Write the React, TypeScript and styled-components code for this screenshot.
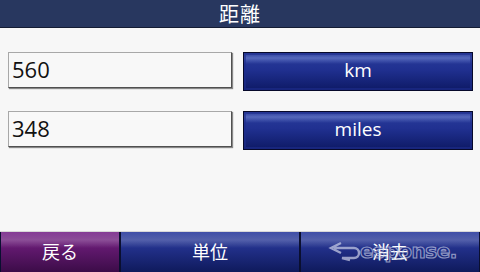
import styled, { createGlobalStyle } from "styled-components";

const GlobalStyle = createGlobalStyle`
    html, body {
        margin: 0;
        padding: 0;
        background: #f7f7f7;
    }
    * {
        box-sizing: border-box;
    }
`;

const rows = [
    { value: "560", unit: "km" },
    { value: "348", unit: "miles" },
];

export default function App() {
    return (
        <>
            <GlobalStyle />
            <Screen>
                <Header>距離</Header>
                <Content>
                    {rows.map(row => (
                        <Row key={row.unit}>
                            <ValueBox>{row.value}</ValueBox>
                            <UnitButton>{row.unit}</UnitButton>
                        </Row>
                    ))}
                </Content>
                <Footer>
                    <FooterButton $tone="purple" $width={120}>戻る</FooterButton>
                    <FooterButton $tone="blue" $width={180}>単位</FooterButton>
                    <FooterButton $tone="blue" $width={180}>消去</FooterButton>
                    <Watermark aria-hidden="true">
                        <svg width="36" height="22" viewBox="0 0 36 22">
                            <path
                                d="M13 3 L3 8 L13 13 M6 8 H26 a5 5 0 0 1 0 10 H14 L22 20"
                                fill="none"
                                stroke="rgba(205,210,232,0.7)"
                                strokeWidth="2.4"
                            />
                        </svg>
                        <span>esponse.</span>
                    </Watermark>
                </Footer>
            </Screen>
        </>
    );
}

const Screen = styled.div`
    width: 480px;
    height: 272px;
    display: flex;
    flex-direction: column;
    background: #f7f7f7;
    overflow: hidden;
    font-family: "Open Sans", "Noto Sans", "Noto Sans CJK JP", sans-serif;
`;

const Header = styled.div`
    height: 28px;
    display: flex;
    align-items: center;
    justify-content: center;
    background: #28375f;
    border-bottom: 1px solid #141c33;
    color: #ffffff;
    font-family: "Noto Sans CJK JP", sans-serif;
    font-size: 20px;
    line-height: 1;
    letter-spacing: 1px;
`;

const Content = styled.div`
    flex: 1;
    display: flex;
    flex-direction: column;
    gap: 20px;
    padding: 24px 7px 0 8px;
`;

const Row = styled.div`
    display: flex;
    gap: 11px;
`;

const ValueBox = styled.div`
    width: 224px;
    height: 36px;
    background: #f8f8f8;
    border: 1px solid #a8a8a8;
    border-bottom-color: #505050;
    border-right-color: #505050;
    box-shadow: 1px 1px 1px rgba(0, 0, 0, 0.45);
    color: #111111;
    font-size: 22px;
    line-height: 33px;
    padding-left: 3px;
`;

const UnitButton = styled.div`
    width: 230px;
    height: 39px;
    border: 1px solid #07092a;
    background:
        linear-gradient(180deg, rgba(255, 255, 255, 0) 0px, rgba(140, 160, 230, 0.45) 5px, rgba(255, 255, 255, 0) 11px),
        linear-gradient(180deg, #2a3d9c 0%, #203090 45%, #0e1a66 100%);
    box-shadow: inset 0 0 0 2px rgba(30, 45, 140, 0.6);
    color: #ffffff;
    font-size: 19px;
    line-height: 35px;
    text-align: center;
`;

const Footer = styled.div`
    position: relative;
    height: 41px;
    display: flex;
    background: #0a0f30;
    border-top: 1px solid #d8d8d8;
`;

const tones = {
    purple: "linear-gradient(180deg, #7a2a8c 0%, #62196f 40%, #3c0c48 100%)",
    blue: "linear-gradient(180deg, #2f40a0 0%, #22308a 40%, #0f1a5c 100%)",
};

const FooterButton = styled.div<{ $tone: "purple" | "blue"; $width: number }>`
    width: ${props => props.$width}px;
    height: 100%;
    display: flex;
    align-items: center;
    justify-content: center;
    background:
        linear-gradient(180deg, rgba(255, 255, 255, 0.08) 0px, rgba(255, 255, 255, 0.2) 8px, rgba(255, 255, 255, 0) 16px),
        ${props => tones[props.$tone]};
    border-left: 1px solid #0a0f30;
    border-right: 1px solid #0a0f30;
    color: #ffffff;
    font-family: "Noto Sans CJK JP", sans-serif;
    font-size: 18px;
    line-height: 1;
    padding-bottom: 3px;
`;

const Watermark = styled.div`
    position: absolute;
    left: 328px;
    top: 7px;
    display: flex;
    align-items: center;
    pointer-events: none;

    span {
        font-family: "DejaVu Sans", sans-serif;
        font-size: 20px;
        font-weight: bold;
        letter-spacing: -0.5px;
        color: transparent;
        -webkit-text-stroke: 1.2px rgba(205, 210, 232, 0.65);
        margin-left: -4px;
    }
`;
